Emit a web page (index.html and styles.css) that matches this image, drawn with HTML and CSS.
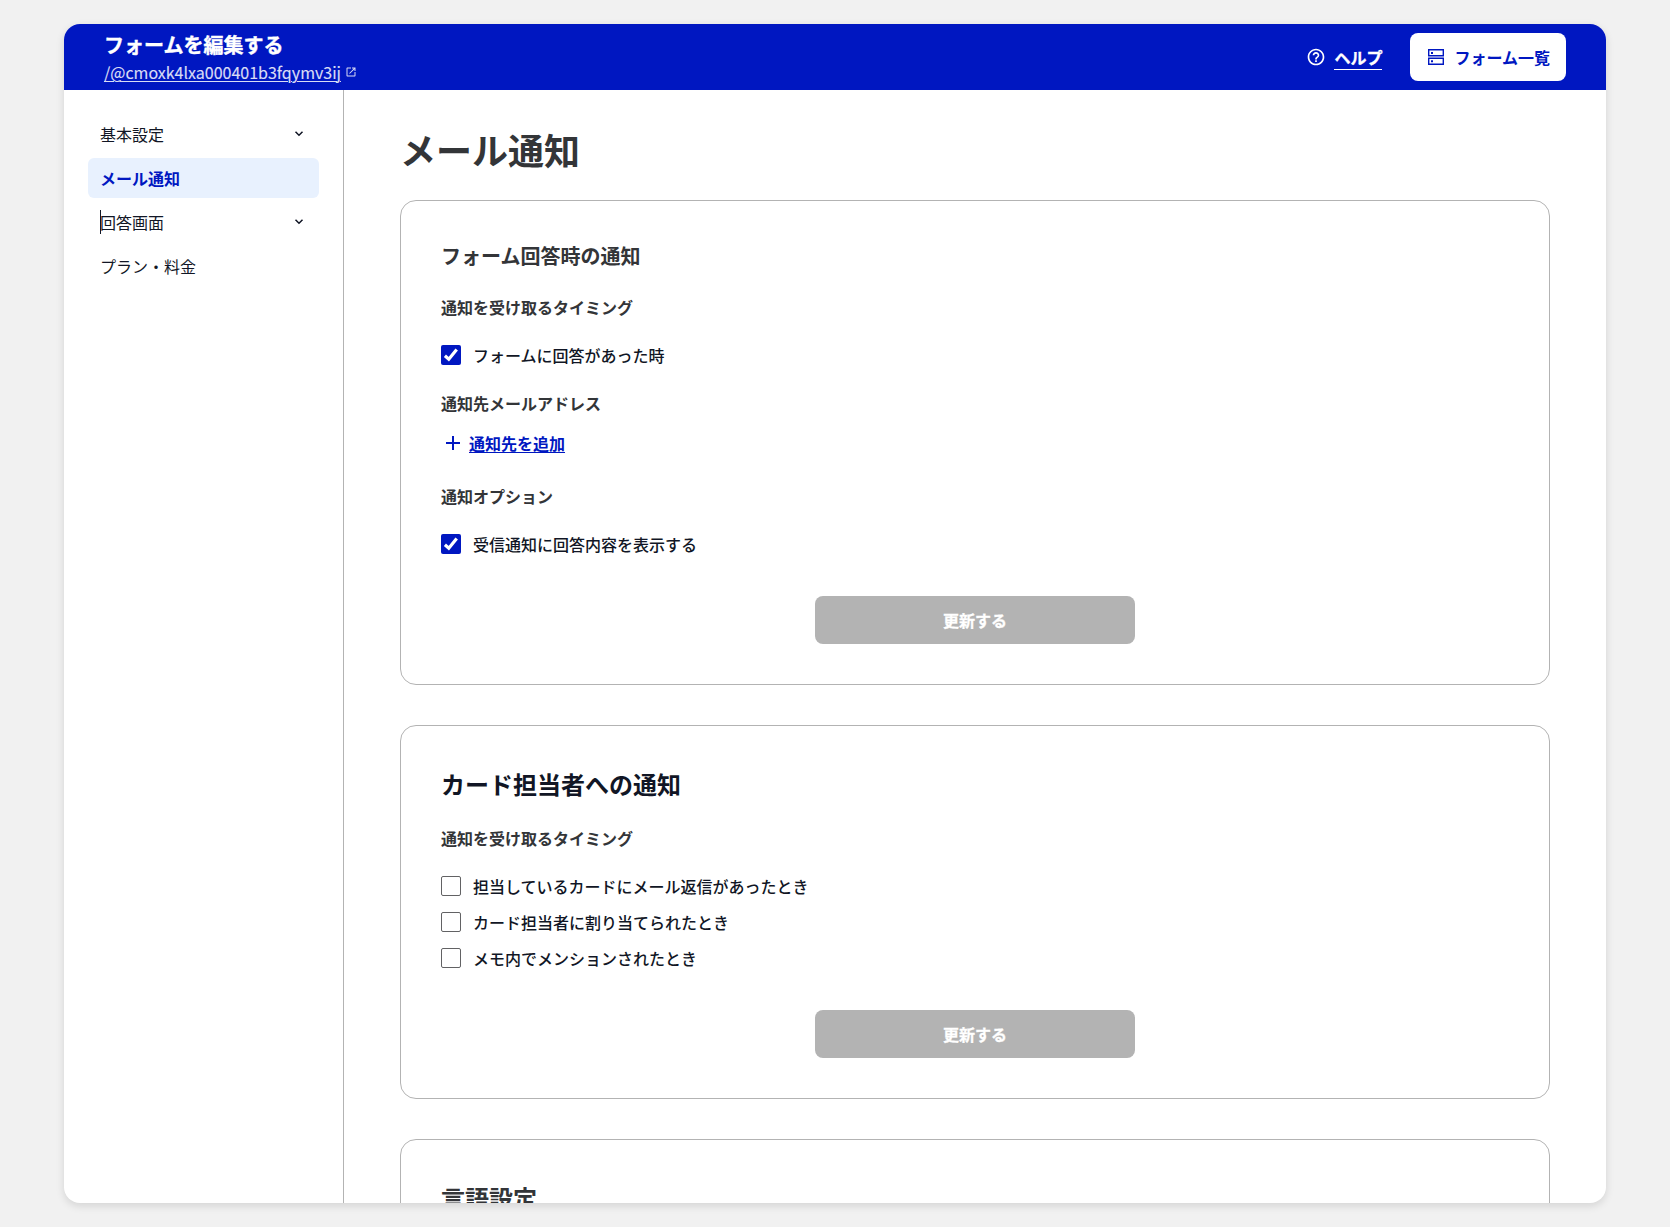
FILE: index.html
```html
<!DOCTYPE html>
<html lang="ja">
<head>
<meta charset="utf-8">
<title>メール通知</title>
<link rel="stylesheet" href="styles.css">
</head>
<body>
<div class="window">
  <header class="header">
    <div class="form-info">
      <div class="form-title">フォームを編集する</div>
      <a class="form-link"><span class="form-path">/@cmoxk4lxa000401b3fqymv3ij</span>
        <svg class="external" viewBox="0 0 24 24" fill="currentColor"><path d="M5 21c-1.100 0-2-.9-2-2V5c0-1.100.9-2 2-2h7v2H5v14h14v-7h2v7c0 1.100-.9 2-2 2zm4.700-5.300-1.400-1.400L17.600 5H14V3h7v7h-2V6.400z"/></svg>
      </a>
    </div>
    <nav class="header-actions">
      <a class="help">
        <svg class="icon" viewBox="0 0 24 24" fill="currentColor"><path d="M11 18h2v-2h-2v2zm1-16C6.480 2 2 6.480 2 12s4.480 10 10 10 10-4.480 10-10S17.520 2 12 2zm0 18c-4.410 0-8-3.590-8-8s3.590-8 8-8 8 3.590 8 8-3.590 8-8 8zm0-14c-2.210 0-4 1.790-4 4h2c0-1.100.9-2 2-2s2 .9 2 2c0 2-3 1.750-3 5h2c0-2.250 3-2.500 3-5 0-2.210-1.790-4-4-4z"/></svg>
        <span class="help-text">ヘルプ</span>
      </a>
      <a class="list-button">
        <svg class="icon" viewBox="0 0 20 20" fill="none" stroke="currentColor" stroke-width="1.400"><path d="M2.700 2.700h14.600v6.100H2.700zM2.700 11.200h14.600v6.100H2.700z"/><path fill="currentColor" stroke="none" d="M5 4.900h2v2H5zM5 13.300h2v2H5z"/></svg>
        <span>フォーム一覧</span>
      </a>
    </nav>
  </header>
  <div class="body">
    <nav class="sidebar">
      <a class="nav-item">基本設定<svg class="chevron" viewBox="0 0 10 10"><path d="M1.500 2.800 5 6.300l3.500-3.500"/></svg></a>
      <a class="nav-item active">メール通知</a>
      <a class="nav-item"><span class="caret"></span>回答画面<svg class="chevron" viewBox="0 0 10 10"><path d="M1.500 2.800 5 6.300l3.500-3.500"/></svg></a>
      <a class="nav-item">プラン・料金</a>
    </nav>
    <main class="main">
      <h1>メール通知</h1>
      <section class="card">
        <h2 class="small">フォーム回答時の通知</h2>
        <h3>通知を受け取るタイミング</h3>
        <label class="check"><span class="box checked"><svg viewBox="0 0 20 20"><path d="M3.900 10.700 7.800 14.200 15.700 4.500"/></svg></span>フォームに回答があった時</label>
        <h3>通知先メールアドレス</h3>
        <a class="add"><svg class="plus" viewBox="0 0 24 24"><path d="M12 5v14M5 12h14"/></svg><span>通知先を追加</span></a>
        <h3 class="options">通知オプション</h3>
        <label class="check"><span class="box checked"><svg viewBox="0 0 20 20"><path d="M3.900 10.700 7.800 14.200 15.700 4.500"/></svg></span>受信通知に回答内容を表示する</label>
        <button class="submit">更新する</button>
      </section>
      <section class="card">
        <h2 class="ink">カード担当者への通知</h2>
        <h3>通知を受け取るタイミング</h3>
        <label class="check"><span class="box"></span>担当しているカードにメール返信があったとき</label>
        <label class="check"><span class="box"></span>カード担当者に割り当てられたとき</label>
        <label class="check"><span class="box"></span>メモ内でメンションされたとき</label>
        <button class="submit">更新する</button>
      </section>
      <section class="card">
        <h2>言語設定</h2>
      </section>
    </main>
  </div>
</div>
</body>
</html>
```
FILE: styles.css
```css
* { box-sizing: border-box; }
body {
  margin: 0;
  height: 1227px;
  padding: 24px 64px;
  overflow: hidden;
  background: #f1f1f1;
  color: #111625;
  font: 500 16px/24px "Noto Sans CJK JP", "Noto Sans", sans-serif;
}
h1, h2, h3 { margin: 0; color: #333538; font-weight: 700; }
svg { display: block; flex: none; }
.window {
  display: flex;
  flex-direction: column;
  height: 1179px;
  overflow: hidden;
  border-radius: 16px;
  background: #fff;
  box-shadow: 0 3px 8px rgba(0, 0, 0, .12);
}
.header {
  display: flex;
  flex: none;
  align-items: center;
  justify-content: space-between;
  height: 66px;
  padding: 0 40px;
  background: #0017c1;
  color: #fff;
}
.form-title { font-size: 20px; font-weight: 700; line-height: 30px; -webkit-text-stroke: .4px #fff; }
.form-link { display: flex; align-items: center; gap: 4px; color: #d9dcf5; font-weight: 400; -webkit-text-stroke: .15px #d9dcf5; }
.form-path { text-decoration: underline; text-underline-offset: 2px; text-decoration-thickness: 1px; }
.external { width: 12px; height: 12px; }
.header-actions { display: flex; align-items: center; gap: 28px; font-weight: 700; }
.help { display: flex; align-items: center; gap: 8px; }
.icon { width: 20px; height: 20px; }
.help-text { border-bottom: 1px solid #fff; line-height: 24px; -webkit-text-stroke: .3px #fff; }
.list-button {
  display: flex;
  align-items: center;
  gap: 8px;
  height: 48px;
  padding: 0 16px;
  border-radius: 8px;
  background: #fff;
  color: #0017c1;
}
.body { display: flex; flex: 1; min-height: 0; }
.sidebar {
  display: flex;
  flex: none;
  flex-direction: column;
  gap: 4px;
  width: 280px;
  padding: 24px;
  border-right: 1px solid #b3b3b3;
  font-weight: 400;
}
.nav-item {
  position: relative;
  display: flex;
  align-items: center;
  justify-content: space-between;
  height: 40px;
  padding: 0 15px 0 12px;
  border-radius: 6px;
}
.active { background: #e8f1fe; color: #0017c1; font-weight: 700; }
.chevron { width: 10px; height: 10px; fill: none; stroke: #111625; stroke-width: 1.500; }
.caret { position: absolute; left: 12px; top: 8px; width: 1px; height: 24px; background: #111625; }
.main { flex: 1; min-width: 0; padding: 32px 56px 0; overflow: hidden; }
h1 { margin-bottom: 24px; font-size: 36px; line-height: 54px; }
.card {
  display: flex;
  flex-direction: column;
  margin-bottom: 40px;
  padding: 40px;
  border: 1px solid #b3b3b3;
  border-radius: 16px;
}
h2 { font-size: 24px; line-height: 36px; }
h2.small { font-size: 20px; line-height: 30px; }
.ink { color: #111625; }
h3 { margin-top: 24px; font-size: 16px; line-height: 24px; }
h3.options { margin-top: 29px; }
.check { display: flex; align-items: center; gap: 12px; margin-top: 24px; }
.check + .check { margin-top: 12px; }
.box { width: 20px; height: 20px; border: 1px solid #626264; border-radius: 2px; }
.checked { border: 0; background: #0017c1; }
.checked path { fill: none; stroke: #fff; stroke-width: 3.200; }
.add { display: flex; align-items: center; gap: 4px; margin-top: 16px; color: #0017c1; font-weight: 700; }
.add span { text-decoration: underline; text-decoration-thickness: 1px; text-underline-offset: 2px; }
.plus { width: 24px; height: 24px; fill: none; stroke: #0017c1; stroke-width: 2; }
.submit {
  align-self: center;
  width: 320px;
  height: 48px;
  margin-top: 40px;
  padding: 0;
  border: 0;
  border-radius: 8px;
  background: #b3b3b3;
  color: #fff;
  font: inherit;
  font-weight: 700;
  -webkit-text-stroke: .3px #fff;
}
.card:last-child { min-height: 240px; }
```
